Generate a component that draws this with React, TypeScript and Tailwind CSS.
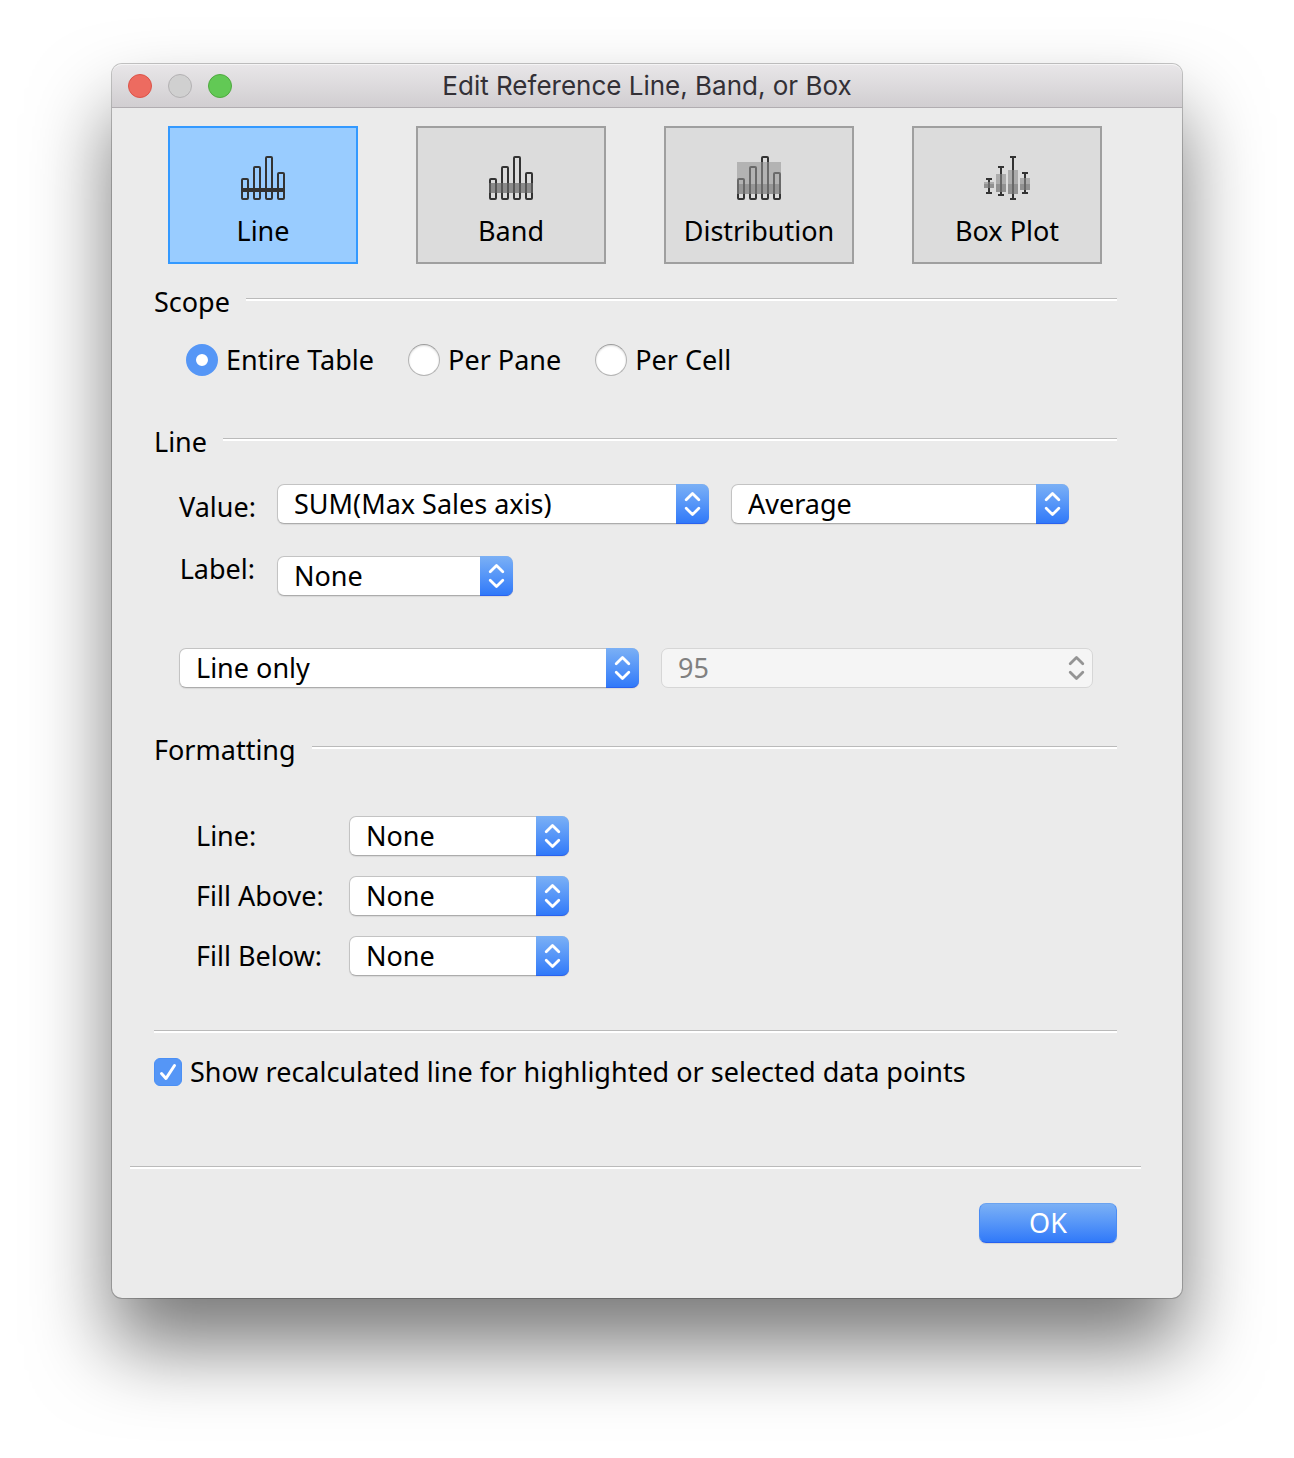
import { useState } from "react"
import type { ReactNode } from "react"
import clsx from "clsx"

type Kind = "line" | "band" | "distribution" | "box"

const Bars = () => (
    <g fill="none" stroke="#333333" strokeWidth="2">
        <rect x="1" y="23" width="6" height="20" rx="1" />
        <rect x="13" y="11" width="6" height="32" rx="1" />
        <rect x="25" y="1" width="6" height="42" rx="1" />
        <rect x="37" y="17" width="6" height="26" rx="1" />
    </g>
)

const LineIcon = () => (
    <svg width="44" height="44" viewBox="0 0 44 44" aria-hidden="true">
        <Bars />
        <rect y="32" width="44" height="4" fill="#333333" />
    </svg>
)

const BandIcon = () => (
    <svg width="44" height="44" viewBox="0 0 44 44" aria-hidden="true">
        <Bars />
        <rect y="27" width="44" height="10" fill="#676767" opacity="0.69" />
    </svg>
)

const DistributionIcon = () => (
    <svg width="44" height="44" viewBox="0 0 44 44" aria-hidden="true">
        <Bars />
        <rect y="6" width="44" height="32" fill="#949494" opacity="0.57" />
        <rect y="28" width="44" height="10" fill="#666666" opacity="0.38" />
    </svg>
)

// x, whisker top, whisker bottom, box top, box bottom
const plots = [
    [0, 22, 38, 26, 32],
    [12, 10, 40, 18, 36],
    [24, 0, 44, 14, 38],
    [36, 16, 38, 22, 34],
]

const BoxPlotIcon = () => (
    <svg width="46" height="44" viewBox="0 0 46 44" aria-hidden="true">
        {plots.map(([x, top, bottom, boxTop, boxBottom]) => (
            <g key={x}>
                <g fill="#333333">
                    <rect x={x + 2} y={top} width="6" height="2" />
                    <rect x={x + 4} y={top} width="2" height={bottom - top} />
                    <rect x={x + 2} y={bottom - 2} width="6" height="2" />
                </g>
                <rect x={x} y={boxTop} width="10" height={boxBottom - boxTop} fill="#8c8c8c" opacity="0.6" />
                <rect x={x} y="28" width="10" height={boxBottom - 28} fill="#666666" opacity="0.38" />
            </g>
        ))}
    </svg>
)

const kinds: { id: Kind, label: string, icon: ReactNode }[] = [
    { id: "line", label: "Line", icon: <LineIcon /> },
    { id: "band", label: "Band", icon: <BandIcon /> },
    { id: "distribution", label: "Distribution", icon: <DistributionIcon /> },
    { id: "box", label: "Box Plot", icon: <BoxPlotIcon /> },
]

const Rule = ({ className }: { className?: string }) => (
    <div className={clsx("h-[3px] border-t border-[#bababa] bg-white", className)} />
)

const SectionHeading = ({ children, className }: { children: ReactNode, className?: string }) => (
    <div className={clsx("flex items-start gap-4", className)}>
        <h2>{children}</h2>
        <Rule className="mt-[11px] flex-1" />
    </div>
)

type SelectProps = {
    id: string
    options: string[]
    disabled?: boolean
    label?: string
    className?: string
}

const Select = ({ id, options, disabled, label, className }: SelectProps) => (
    <div className={clsx("relative h-10", className)}>
        <select
            id={id}
            aria-label={label}
            disabled={disabled}
            className={clsx(
                "h-10 w-full appearance-none rounded-[7px] border pl-4 pr-10 leading-[38px] opacity-100",
                disabled
                    ? "border-[#d6d6d6] bg-[#f5f5f5] text-[#808080]"
                    : "border-[#c3c3c3] border-b-[#acacac] bg-white text-black shadow-[0_1px_1px_rgba(0,0,0,0.08)]"
            )}
        >
            {options.map((option) => (
                <option key={option}>{option}</option>
            ))}
        </select>
        <span
            className={clsx(
                "pointer-events-none absolute inset-y-0 right-0 w-[33px] rounded-r-[7px]",
                disabled
                    ? "text-[#949494]"
                    : "border-b border-[#2a62ee] bg-linear-to-b from-[#7bb0f5] to-[#3079f9] text-white"
            )}
        >
            <svg width="33" height="40" viewBox="0 0 33 40" fill="none" stroke="currentColor" strokeWidth="2.8" strokeLinecap="round" strokeLinejoin="round" aria-hidden="true">
                <path d="M10.2 15.8 16.5 9.5l6.3 6.3M10.2 24.3l6.3 6.3 6.3-6.3" />
            </svg>
        </span>
    </div>
)

const scopes = ["Entire Table", "Per Pane", "Per Cell"]

const formats = [
    { id: "format-line", label: "Line:" },
    { id: "fill-above", label: "Fill Above:" },
    { id: "fill-below", label: "Fill Below:" },
]

const App = () => {
    const [kind, setKind] = useState<Kind>("line")
    const [scope, setScope] = useState("Entire Table")
    const [recalculate, setRecalculate] = useState(true)

    return (
        <main className="min-h-screen overflow-hidden bg-white px-28 pt-16 pb-40 font-['Noto_Sans',sans-serif] text-[27px] leading-[30px] text-black">
            <div
                role="dialog"
                aria-labelledby="dialog-title"
                className="rounded-[10px] bg-[#ebebeb] shadow-[0_0_0_1px_rgba(0,0,0,0.22),0_48px_80px_rgba(0,0,0,0.53)]"
            >
                <header className="grid h-11 grid-cols-[1fr_auto_1fr] items-center rounded-t-[10px] border-t border-b border-t-[#f5f4f5] border-b-[#b1adb1] bg-linear-to-b from-[#e8e6e8] to-[#d1ced1] px-4">
                    <div className="flex gap-4">
                        <button aria-label="Close" className="size-6 rounded-full border border-[#dc5348] bg-[#ed6b60]" />
                        <button aria-label="Minimize" disabled className="size-6 rounded-full border border-[#b3b1b3] bg-[#d0d0d0]" />
                        <button aria-label="Zoom" className="size-6 rounded-full border border-[#4fa93f] bg-[#62c955]" />
                    </div>
                    <h1 id="dialog-title" className="font-[Inter,sans-serif] text-[26px] text-[#333036]">
                        Edit Reference Line, Band, or Box
                    </h1>
                </header>

                <div className="grid grid-cols-4 gap-[58px] pt-[18px] pr-20 pl-14">
                    {kinds.map((item) => (
                        <button
                            key={item.id}
                            aria-pressed={kind === item.id}
                            onClick={() => setKind(item.id)}
                            className={clsx(
                                "flex h-[138px] flex-col items-center gap-4 border-2 pt-7",
                                kind === item.id
                                    ? "border-[#3399ff] bg-[#99ccff]"
                                    : "border-[#9f9f9f] bg-[#dcdcdc]"
                            )}
                        >
                            {item.icon}
                            {item.label}
                        </button>
                    ))}
                </div>

                <div className="pr-[65px] pl-[42px]">
                    <SectionHeading className="mt-[23px]">Scope</SectionHeading>
                    <div role="radiogroup" aria-label="Scope" className="mt-[27px] flex gap-[34px] pl-8">
                        {scopes.map((name) => (
                            <label key={name} className="flex items-center gap-2">
                                <input
                                    type="radio"
                                    name="scope"
                                    checked={scope === name}
                                    onChange={() => setScope(name)}
                                    className="size-8 appearance-none rounded-full border border-[#b4b4b4] border-t-[#9c9c9c] bg-white shadow-[inset_0_1px_2px_rgba(0,0,0,0.15)] checked:border-[10px] checked:border-[#5596f6] checked:shadow-none"
                                />
                                {name}
                            </label>
                        ))}
                    </div>

                    <SectionHeading className="mt-[51px]">Line</SectionHeading>
                    <div className="mt-[27px] grid grid-cols-[76px_432fr_338fr] gap-x-[22px] gap-y-8 pr-12 pl-[25px]">
                        <label htmlFor="value" className="self-end pb-1 text-right leading-[26px]">Value:</label>
                        <Select id="value" options={["SUM(Max Sales axis)"]} />
                        <Select id="aggregation" label="Aggregation" options={["Average", "Median", "Sum"]} />
                        <label htmlFor="label" className="text-right leading-[26px]">Label:</label>
                        <Select id="label" options={["None", "Value", "Computation"]} className="w-[236px]" />
                    </div>
                    <div className="mt-[52px] grid grid-cols-[460fr_432fr] gap-[22px] pr-6 pl-[25px]">
                        <Select id="interval" label="Interval" options={["Line only"]} />
                        <Select id="confidence" label="Confidence" options={["95"]} disabled />
                    </div>

                    <SectionHeading className="mt-[47px]">Formatting</SectionHeading>
                    <div className="mt-[51px] flex flex-col gap-5 pl-[42px]">
                        {formats.map((item) => (
                            <div key={item.id} className="flex items-center">
                                <label htmlFor={item.id} className="w-[153px]">{item.label}</label>
                                <Select id={item.id} options={["None"]} className="w-[220px]" />
                            </div>
                        ))}
                    </div>

                    <Rule className="mt-[54px]" />
                    <label className="mt-6 flex items-center gap-2">
                        <span className="relative size-7">
                            <input
                                type="checkbox"
                                checked={recalculate}
                                onChange={(e) => setRecalculate(e.target.checked)}
                                className="block size-7 appearance-none rounded-md border border-[#b4b4b4] bg-white checked:border-[#4a8ff5] checked:bg-[#5596f6]"
                            />
                            {recalculate && (
                                <svg className="pointer-events-none absolute inset-0" width="28" height="28" viewBox="0 0 28 28" fill="none" stroke="white" strokeWidth="3" strokeLinecap="round" strokeLinejoin="round" aria-hidden="true">
                                    <path d="M7.5 15.5l4.5 5L20.5 7.5" />
                                </svg>
                            )}
                        </span>
                        Show recalculated line for highlighted or selected data points
                    </label>
                </div>

                <Rule className="mt-[79px] mr-[41px] ml-[18px]" />
                <footer className="flex justify-end pt-[34px] pr-[65px] pb-[55px]">
                    <button className="h-10 w-[138px] rounded-[7px] border border-[#4a8cf4] border-t-[#6ba3f0] border-b-[#2560f0] bg-linear-to-b from-[#7bb0f5] to-[#3079f9] text-white shadow-[0_1px_1px_rgba(0,0,0,0.1)]">
                        OK
                    </button>
                </footer>
            </div>
        </main>
    )
}

export default App
